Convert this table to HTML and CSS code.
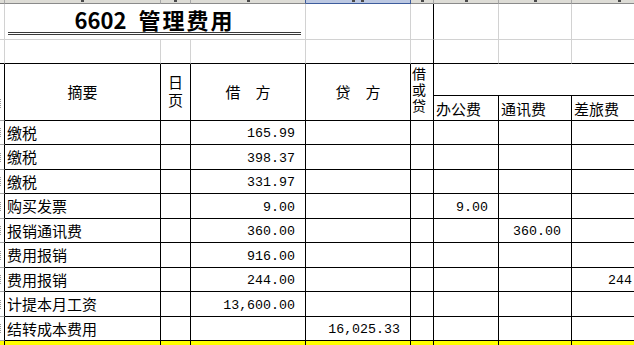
FILE: index.html
```html
<!DOCTYPE html>
<html lang="zh">
<head>
<meta charset="utf-8">
<title>6602 管理费用</title>
<link rel="stylesheet" href="styles.css">
</head>
<body>
<div class="viewport">
<div class="sheet">
  <!-- column header bar -->
  <div class="hd"></div>
  <div class="hd"><i></i></div>
  <div class="hd"><i></i></div>
  <div class="hd hd-selL"><i></i></div>
  <div class="hd hd-sel"><i></i><i></i></div>
  <div class="hd"><i></i></div>
  <div class="hd"><i></i></div>
  <div class="hd"><i></i></div>
  <div class="hd"><i></i></div>

  <!-- title row -->
  <div class="c gr gb"></div>
  <div class="c gr gb title"><div class="title-text">6602<span class="title-cjk">管理费用</span></div></div>
  <div class="c gr gb"></div>
  <div class="c gb"></div>
  <div class="c gr gb"></div>
  <div class="c gr gb"></div>
  <div class="c gr gb"></div>

  <!-- blank row -->
  <div class="c gr"></div>
  <div class="c gr"></div>
  <div class="c gr"></div>
  <div class="c gr"></div>
  <div class="c gr"></div>
  <div class="c"></div>
  <div class="c gr"></div>
  <div class="c gr"></div>
  <div class="c gr"></div>

  <!-- header -->
  <div class="c strip span2 mark-low"></div>
  <div class="c span2 hcenter">摘要</div>
  <div class="c span2 hcenter"><span class="vtext day">日页</span></div>
  <div class="c span2 hcenter">借　方</div>
  <div class="c span2 hcenter">贷　方</div>
  <div class="c span2 dc"><span class="vtext dir">借或贷</span></div>
  <div class="c group"></div>
  <div class="c label">办公费</div>
  <div class="c label">通讯费</div>
  <div class="c label">差旅费</div>

  <!-- data rows -->
  <div class="c strip"></div>
  <div class="c txt">缴税</div><div class="c"></div><div class="c num">165.99</div><div class="c num"></div><div class="c"></div><div class="c num"></div><div class="c num"></div><div class="c num"></div>

  <div class="c strip"></div>
  <div class="c txt">缴税</div><div class="c"></div><div class="c num">398.37</div><div class="c num"></div><div class="c"></div><div class="c num"></div><div class="c num"></div><div class="c num"></div>

  <div class="c strip"></div>
  <div class="c txt">缴税</div><div class="c"></div><div class="c num">331.97</div><div class="c num"></div><div class="c"></div><div class="c num"></div><div class="c num"></div><div class="c num"></div>

  <div class="c strip"></div>
  <div class="c txt">购买发票</div><div class="c"></div><div class="c num">9.00</div><div class="c num"></div><div class="c"></div><div class="c num">9.00</div><div class="c num"></div><div class="c num"></div>

  <div class="c strip"></div>
  <div class="c txt">报销通讯费</div><div class="c"></div><div class="c num">360.00</div><div class="c num"></div><div class="c"></div><div class="c num"></div><div class="c num">360.00</div><div class="c num"></div>

  <div class="c strip"></div>
  <div class="c txt">费用报销</div><div class="c"></div><div class="c num">916.00</div><div class="c num"></div><div class="c"></div><div class="c num"></div><div class="c num"></div><div class="c num"></div>

  <div class="c strip"></div>
  <div class="c txt">费用报销</div><div class="c"></div><div class="c num">244.00</div><div class="c num"></div><div class="c"></div><div class="c num"></div><div class="c num"></div><div class="c num">244.00</div>

  <div class="c strip"></div>
  <div class="c txt">计提本月工资</div><div class="c"></div><div class="c num">13,600.00</div><div class="c num"></div><div class="c"></div><div class="c num"></div><div class="c num"></div><div class="c num"></div>

  <div class="c strip"></div>
  <div class="c txt">结转成本费用</div><div class="c"></div><div class="c num"></div><div class="c num">16,025.33</div><div class="c"></div><div class="c num"></div><div class="c num"></div><div class="c num"></div>

  <!-- highlighted row (cut off at the bottom) -->
  <div class="c y strip"></div>
  <div class="c y"></div><div class="c y"></div><div class="c y"></div><div class="c y"></div><div class="c y"></div><div class="c y"></div><div class="c y"></div><div class="c y"></div>
</div>
</div>
</body>
</html>
```

FILE: styles.css
```css
html, body {
  margin: 0;
  padding: 0;
  background: #fff;
  overflow: hidden;
}
.viewport {
  width: 634px;
  height: 345px;
  overflow: hidden;
}
.sheet {
  display: grid;
  grid-template-columns: 5px 156px 30px 115px 105px 23px 65px 73px 95px;
  grid-template-rows: 4px 36px 24px 32px 25px 24px 25px 24px 25px 24px 25px 24px 25px 24px 4px;
  width: 667px;
  font-family: "Noto Sans CJK SC", "Noto Sans", sans-serif;
  font-size: 15px;
  line-height: 18px;
  color: #000;
}

/* column header strip of the spreadsheet */
.hd {
  box-sizing: border-box;
  background: #dddcd6;
  border-right: 1px solid #a8a8a8;
  border-bottom: 1px solid #8a8a8a;
  display: flex;
  justify-content: center;
  align-items: flex-start;
  gap: 6px;
  overflow: hidden;
}
.hd i {
  display: block;
  width: 3px;
  height: 2px;
  background: #4a4a4a;
}
.hd-selL { border-right-color: #3d5c9c; }
.hd-sel {
  background: #bcc8e2;
  border-right-color: #3d5c9c;
  border-bottom-color: #3d5c9c;
}

/* cells */
.c {
  box-sizing: border-box;
  border-right: 1px solid #000;
  border-bottom: 1px solid #000;
  overflow: hidden;
  display: flex;
  align-items: center;
  white-space: nowrap;
  min-width: 0;
}
.gr { border-right-color: #d2d2d2; }
.gb { border-bottom-color: #d2d2d2; }

.title {
  grid-column: span 3;
  align-items: flex-end;
  padding: 0 4px 4px 3px;
}
.title-text {
  flex: 1;
  text-align: center;
  border-bottom: 3px double #3a3a3a;
  font-size: 22px;
  line-height: 24px;
  font-weight: 700;
  padding-bottom: 1px;
}
.title-cjk {
  margin-left: 12px;
  letter-spacing: 2px;
}

.span2 { grid-row: span 2; }
.hcenter { justify-content: center; }

/* vertically stacked header labels */
.vtext {
  writing-mode: vertical-rl;
  text-orientation: upright;
  line-height: 1;
}
.day {
  font-size: 15px;
  letter-spacing: 3px;
  margin-top: 2px;
}
.dir {
  font-size: 14px;
  letter-spacing: 2px;
}
.dc {
  justify-content: flex-start;
  padding-left: 1px;
  padding-bottom: 2px;
  overflow: visible;
}

.group { grid-column: span 3; }
.label { padding-left: 2px; padding-top: 2px; }

/* clipped remains of the neighbouring column on the far left */
.strip {
  justify-content: flex-end;
  border-bottom-color: #a8a8a8;
}
.strip::after {
  content: "";
  display: block;
  width: 2px;
  height: 9px;
  margin-right: 1px;
  border-left: 1px dotted #9a9a9a;
}
.mark-low { align-items: flex-end; padding-bottom: 12px; }
.y.strip::after { display: none; }

.txt { padding-left: 2px; }
.num {
  justify-content: flex-end;
  padding-right: 10px;
  padding-top: 3px;
  font-family: "Liberation Mono", "DejaVu Sans Mono", monospace;
  font-size: 13.3px;
}

.y {
  background: #ffff00;
  border-bottom: none;
}
```
